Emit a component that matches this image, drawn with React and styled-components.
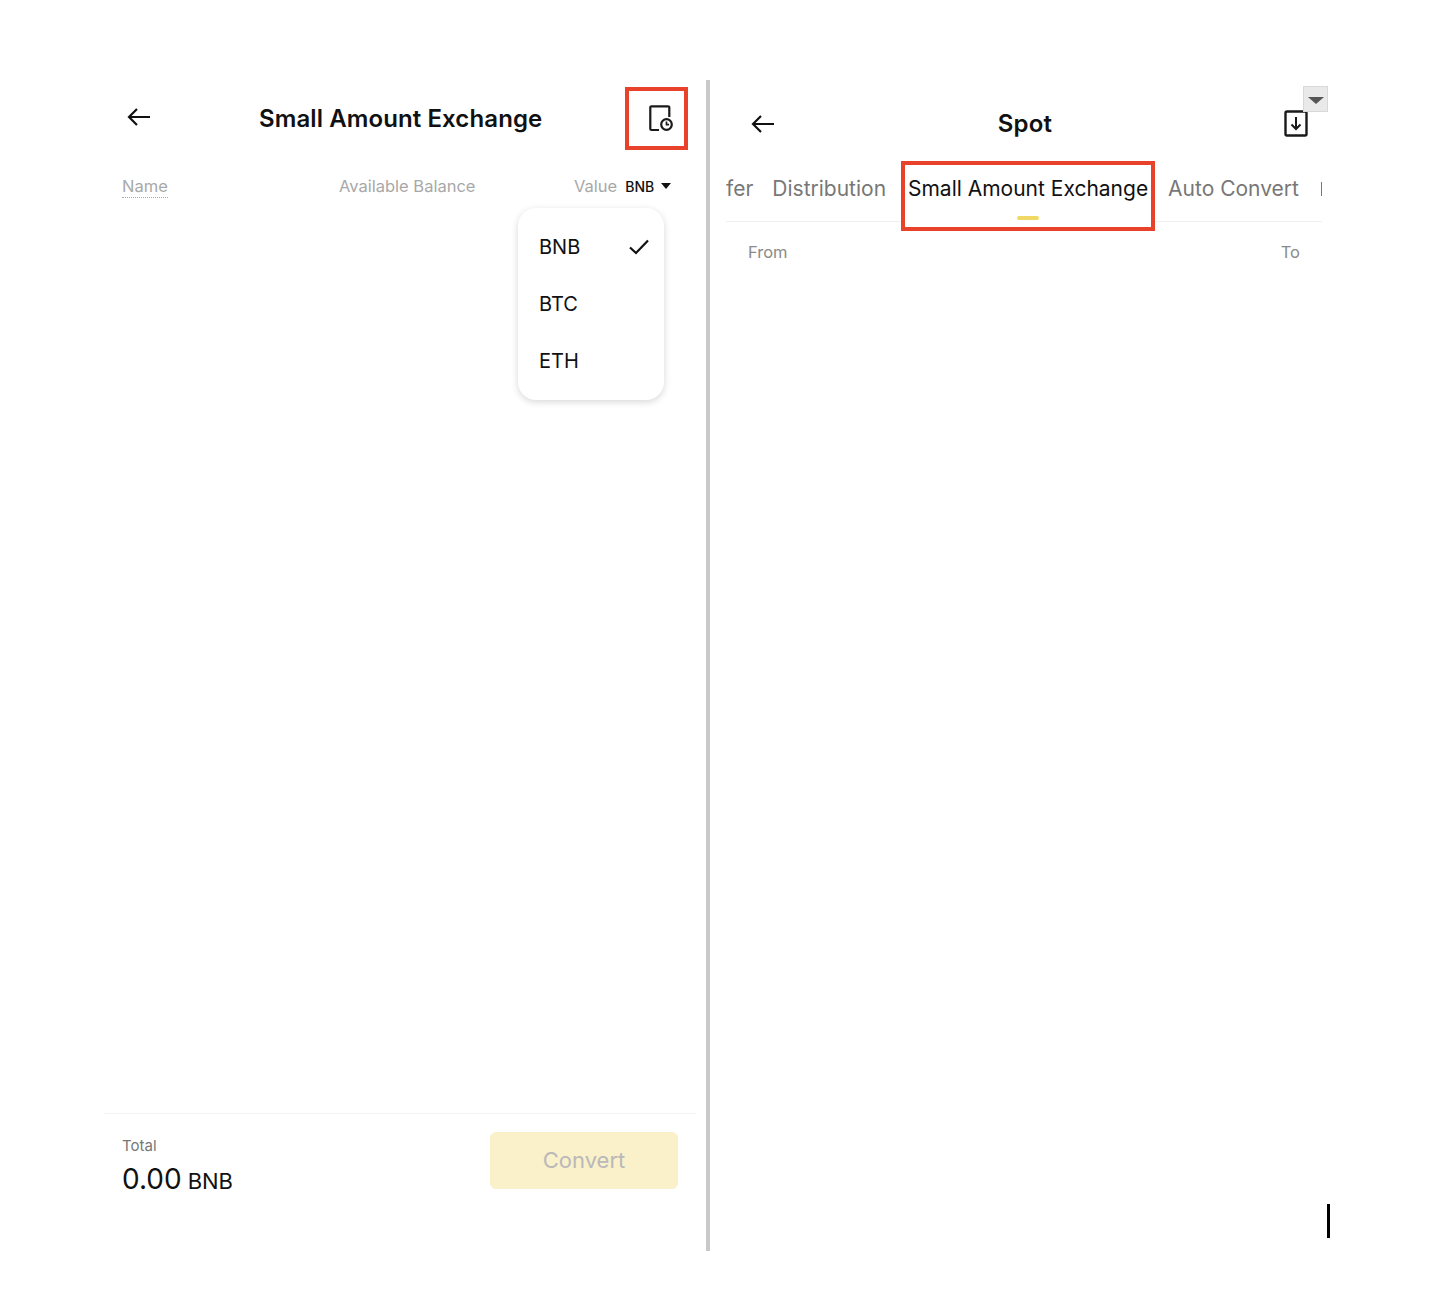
import React from "react";
import styled, { createGlobalStyle } from "styled-components";

const GlobalStyle = createGlobalStyle`
  html, body {
    margin: 0;
    background: #ffffff;
  }
  body {
    font-family: "Inter", "Liberation Sans", sans-serif;
    color: #111111;
  }
`;

const Page = styled.div`
  display: flex;
  box-sizing: border-box;
  width: 1446px;
  height: 1298px;
  padding: 80px 0 47px 104px;
`;

const LeftPanel = styled.section`
  display: flex;
  flex-direction: column;
  width: 592px;
  margin-right: 10px;
`;

const Divider = styled.div`
  width: 4px;
  background: #c9c9c9;
`;

const RightPanel = styled.section`
  position: relative;
  display: flex;
  flex-direction: column;
  box-sizing: border-box;
  width: 612px;
  padding-left: 16px;
`;

const LeftHeader = styled.header`
  display: grid;
  grid-template-columns: 155px auto 1fr;
  align-items: center;
  height: 63px;
  margin-top: 7px;
  padding-right: 8px;
`;

const BackButton = styled.div`
  display: flex;
  padding-left: ${(p) => p.$inset}px;
  padding-bottom: ${(p) => p.$lift || 0}px;
  color: #111111;
`;

const Title = styled.h1`
  margin: 0;
  font-size: 24px;
  font-weight: 600;
  letter-spacing: 0.1px;
  color: #111111;
`;

const Highlight = styled.div`
  display: flex;
  align-items: center;
  justify-content: center;
  justify-self: end;
  box-sizing: border-box;
  width: 63px;
  height: 63px;
  padding-left: 8px;
  border: 4px solid #e8432a;
`;

const ColumnRow = styled.div`
  display: grid;
  grid-template-columns: 217px 235px 1fr;
  align-items: center;
  height: 24px;
  margin-top: 24px;
  padding-left: 18px;
  font-size: 16.5px;
  color: #a8a8a8;
`;

const NameLabel = styled.span`
  justify-self: start;
  margin-top: 2px;
  padding-bottom: 1px;
  border-bottom: 1px dotted #a8a8a8;
`;

const ValueCell = styled.div`
  display: flex;
  align-items: center;
`;

const UnitPicker = styled.span`
  display: flex;
  align-items: center;
  gap: 7px;
  margin-left: 8px;
  font-size: 14px;
  font-weight: 500;
  color: #111111;
`;

const Caret = styled.span`
  width: 0;
  height: 0;
  border-left: 5.5px solid transparent;
  border-right: 5.5px solid transparent;
  border-top: 6px solid #111111;
`;

const Body = styled.div`
  position: relative;
  flex: 1;
`;

const Menu = styled.ul`
  position: absolute;
  top: 10px;
  left: 414px;
  box-sizing: border-box;
  width: 146px;
  height: 192px;
  margin: 0;
  padding: 11px 15px 0 21px;
  list-style: none;
  background: #ffffff;
  border-radius: 18px;
  box-shadow: 0 2px 7px rgba(0, 0, 0, 0.16);
`;

const MenuItem = styled.li`
  display: flex;
  align-items: center;
  justify-content: space-between;
  height: 57px;
  padding-bottom: 1px;
  box-sizing: border-box;
  font-size: 20px;
  color: #111111;
`;

const Footer = styled.footer`
  display: flex;
  align-items: flex-start;
  justify-content: space-between;
  box-sizing: border-box;
  height: 138px;
  padding: 18px 18px 0;
  border-top: 1px solid #f2f2f2;
`;

const TotalLabel = styled.div`
  margin-top: 2px;
  font-size: 15px;
  line-height: 24px;
  color: #777777;
`;

const TotalValue = styled.div`
  margin-top: 2px;
  font-size: 28px;
  line-height: 38px;
  color: #111111;
  span {
    margin-left: 6px;
    font-size: 22px;
  }
`;

const ConvertButton = styled.button`
  width: 188px;
  height: 57px;
  padding: 0 0 2px;
  border: 0;
  border-radius: 6px;
  background: #faf0c9;
  font: inherit;
  font-size: 22px;
  color: #b9b9b9;
`;

const SpotHeader = styled.header`
  display: grid;
  grid-template-columns: 1fr auto 1fr;
  align-items: center;
  height: 75px;
  margin-top: 6px;
`;

const SpotTitle = styled(Title)`
  padding-left: 2px;
  letter-spacing: 0.2px;
`;

const SpotActions = styled.div`
  display: flex;
  justify-content: flex-end;
  padding-right: 14px;
`;

const CollapseTag = styled.div`
  position: absolute;
  top: 6px;
  left: 593px;
  display: flex;
  align-items: center;
  justify-content: center;
  box-sizing: border-box;
  width: 25px;
  height: 26px;
  padding-top: 2px;
  background: #e9e9e9;
  border: 1px solid #d8d8d8;
`;

const CollapseCaret = styled.span`
  width: 0;
  height: 0;
  border-left: 8px solid transparent;
  border-right: 8px solid transparent;
  border-top: 7px solid #555555;
`;

const TabStrip = styled.nav`
  position: relative;
  display: flex;
  align-items: flex-start;
  height: 70px;
  overflow: hidden;
  font-size: 21px;
  color: #777777;
  white-space: nowrap;
  &::before {
    content: "";
    position: absolute;
    top: 60px;
    left: 0;
    right: 0;
    height: 1px;
    background: #f0f0f0;
  }
`;

const Tab = styled.span`
  flex: none;
  margin-left: ${(p) => p.$gap}px;
  padding-top: 14px;
  line-height: 28px;
`;

const ActiveTab = styled.div`
  position: relative;
  flex: none;
  display: flex;
  flex-direction: column;
  align-items: center;
  box-sizing: border-box;
  width: 254px;
  height: 70px;
  margin-left: 15px;
  padding-top: 10px;
  border: 4px solid #e8432a;
  background: #ffffff;
  line-height: 28px;
  color: #111111;
`;

const ActiveBar = styled.span`
  width: 22px;
  height: 4px;
  margin-top: 13px;
  border-radius: 2px;
  background: #efd964;
`;

const TabEdge = styled.span`
  flex: none;
  width: 2px;
  height: 14px;
  margin: 21px 0 0 22px;
  background: #777777;
`;

const FromToRow = styled.div`
  display: flex;
  justify-content: space-between;
  margin-top: 9px;
  padding: 0 22px;
  font-size: 16.5px;
  line-height: 24px;
  color: #8a8a8a;
`;

const EdgeMark = styled.div`
  position: absolute;
  top: 1124px;
  left: 617px;
  width: 3px;
  height: 34px;
  background: #000000;
`;

const BackArrow = () => (
  <svg width="24" height="20" viewBox="0 0 24 20" fill="none" stroke="currentColor" strokeWidth="2.2">
    <path d="M23 10H2M10 2l-8 8 8 8" />
  </svg>
);

const HistoryIcon = () => (
  <svg width="24" height="27" viewBox="0 0 24 27" fill="none" stroke="#1a1a1a" strokeWidth="2.2">
    <path d="M10 25H2.5A1.2 1.2 0 0 1 1.3 23.8V2.5A1.2 1.2 0 0 1 2.5 1.3h16.6a1.2 1.2 0 0 1 1.2 1.2V12" />
    <circle cx="17.5" cy="19.5" r="5.3" />
    <path d="M17.5 16.5v3.2h2.6" strokeWidth="1.7" />
  </svg>
);

const CheckIcon = () => (
  <svg width="20" height="16" viewBox="0 0 20 16" fill="none" stroke="#111111" strokeWidth="2.2">
    <path d="M1 8.5 7 14 19 1.5" />
  </svg>
);

const DownloadIcon = () => (
  <svg width="24" height="27" viewBox="0 0 24 27" fill="none" stroke="#1a1a1a" strokeWidth="2">
    <rect x="1.5" y="1.5" width="21" height="24" rx="1.5" strokeWidth="2.4" />
    <path d="M12 7v12M7.5 14.5 12 19l4.5-4.5" />
  </svg>
);

function App() {
  return (
    <Page>
      <GlobalStyle />
      <LeftPanel>
        <LeftHeader>
          <BackButton $inset={23} $lift={3}>
            <BackArrow />
          </BackButton>
          <Title>Small Amount Exchange</Title>
          <Highlight>
            <HistoryIcon />
          </Highlight>
        </LeftHeader>
        <ColumnRow>
          <NameLabel>Name</NameLabel>
          <span>Available Balance</span>
          <ValueCell>
            Value
            <UnitPicker>
              BNB
              <Caret />
            </UnitPicker>
          </ValueCell>
        </ColumnRow>
        <Body>
          <Menu>
            <MenuItem>
              BNB
              <CheckIcon />
            </MenuItem>
            <MenuItem>BTC</MenuItem>
            <MenuItem>ETH</MenuItem>
          </Menu>
        </Body>
        <Footer>
          <div>
            <TotalLabel>Total</TotalLabel>
            <TotalValue>
              0.00<span>BNB</span>
            </TotalValue>
          </div>
          <ConvertButton>Convert</ConvertButton>
        </Footer>
      </LeftPanel>
      <Divider />
      <RightPanel>
        <SpotHeader>
          <BackButton $inset={25}>
            <BackArrow />
          </BackButton>
          <SpotTitle>Spot</SpotTitle>
          <SpotActions>
            <DownloadIcon />
          </SpotActions>
        </SpotHeader>
        <CollapseTag>
          <CollapseCaret />
        </CollapseTag>
        <TabStrip>
          <Tab $gap={0}>fer</Tab>
          <Tab $gap={19}>Distribution</Tab>
          <ActiveTab>
            Small Amount Exchange
            <ActiveBar />
          </ActiveTab>
          <Tab $gap={13}>Auto Convert</Tab>
          <TabEdge />
        </TabStrip>
        <FromToRow>
          <span>From</span>
          <span>To</span>
        </FromToRow>
        <EdgeMark />
      </RightPanel>
    </Page>
  );
}

export default App;
